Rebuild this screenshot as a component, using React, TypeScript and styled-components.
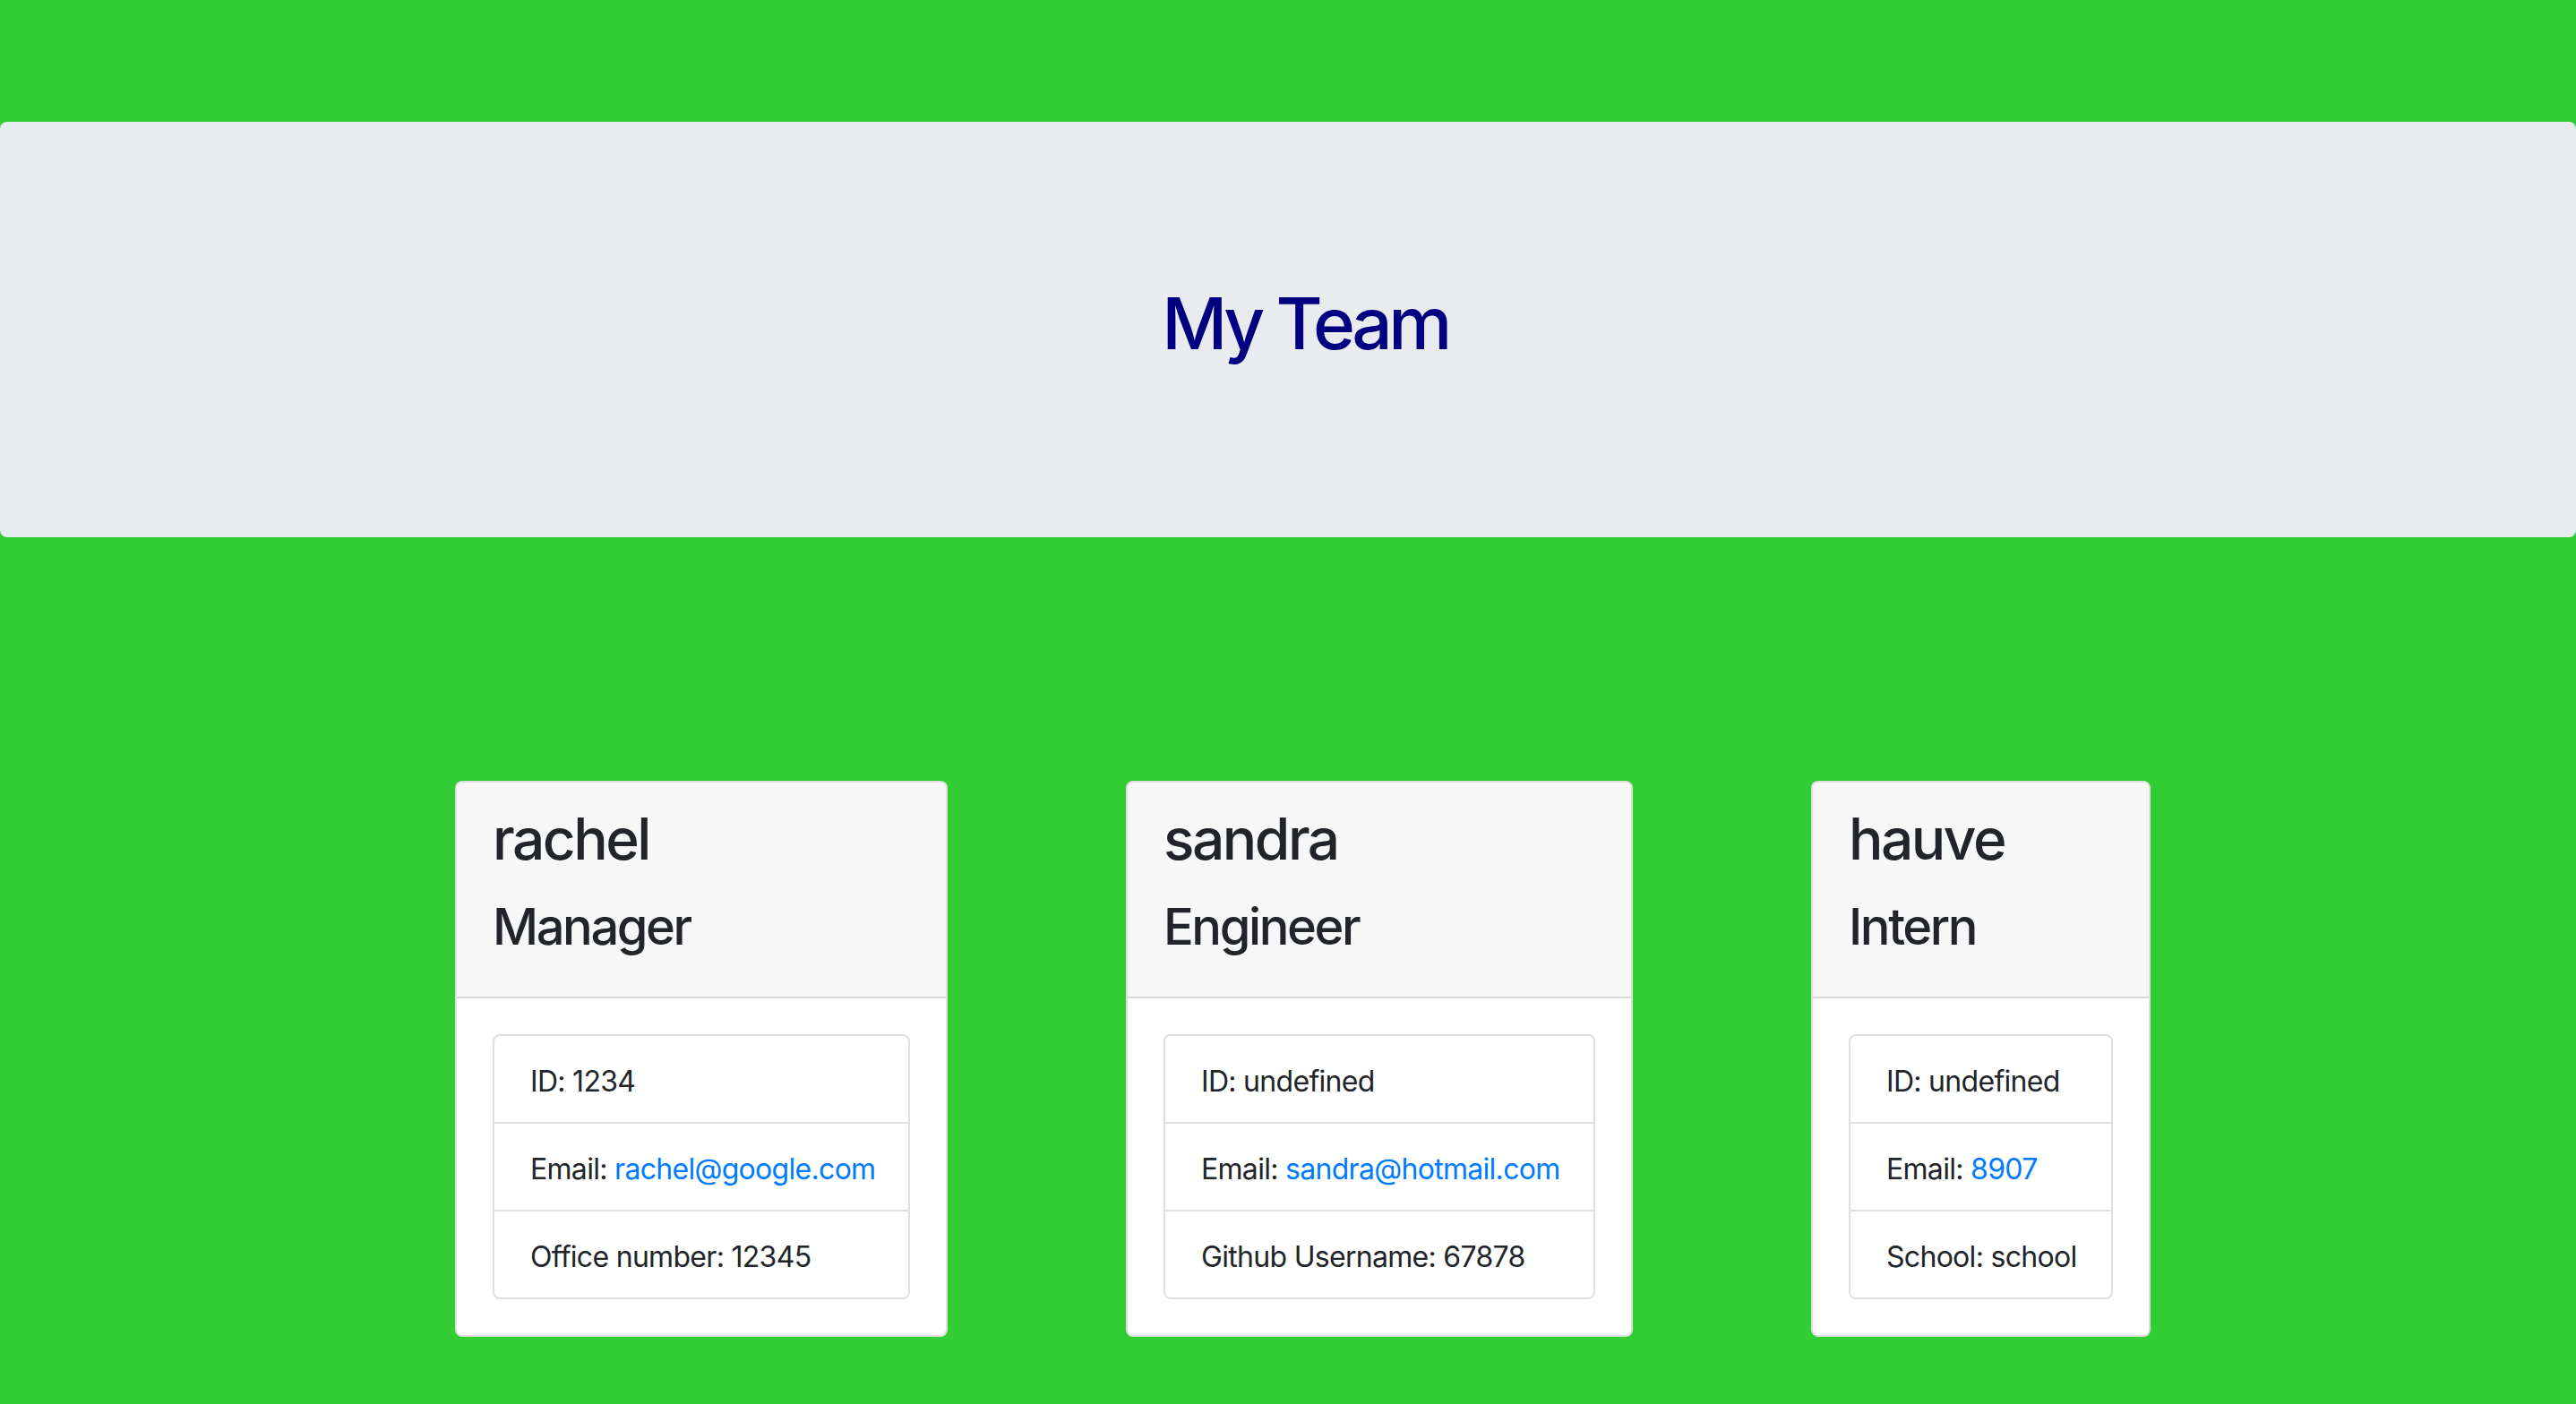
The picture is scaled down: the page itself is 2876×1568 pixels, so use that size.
import React from "react";
import styled, { createGlobalStyle } from "styled-components";

const GlobalStyle = createGlobalStyle`
  html, body {
    margin: 0;
    padding: 0;
  }
  body {
    background: #32cd32;
    font-family: Inter, "Noto Sans", "Liberation Sans", sans-serif;
    color: #212529;
    min-height: 1568px;
  }
  * { box-sizing: border-box; }
`;

const Page = styled.div`
  display: flex;
  flex-direction: column;
  padding-top: 136px;
`;

const Jumbotron = styled.header`
  background: #e9ecef;
  border-radius: 8px;
  height: 464px;
  padding: 177px 0 0 38px;
  text-align: center;
`;

const Title = styled.h1`
  margin: 0;
  font-size: 80px;
  line-height: 96px;
  font-weight: 500;
  color: #000080;
  letter-spacing: -4.5px;
`;

const CardRow = styled.main`
  display: flex;
  align-items: flex-start;
  gap: 199px;
  padding-left: 508px;
  margin-top: 272px;
`;

const Card = styled.section<{ $w: number }>`
  width: ${(p) => p.$w}px;
  background: #fff;
  border: 2px solid rgba(0, 0, 0, 0.125);
  border-radius: 8px;
  display: flex;
  flex-direction: column;
  overflow: hidden;
`;

const CardHeader = styled.div`
  background: #f7f7f7;
  padding: 24px 40px;
  border-bottom: 2px solid rgba(0, 0, 0, 0.125);
`;

const Name = styled.h2`
  margin: 0 0 27px;
  font-size: 64px;
  line-height: 77px;
  font-weight: 500;
  color: #212529;
  letter-spacing: -2.5px;
`;

const Role = styled.h3`
  margin: 0 0 20px;
  font-size: 56px;
  line-height: 67px;
  font-weight: 500;
  color: #212529;
  letter-spacing: -2.4px;
`;

const CardBody = styled.div`
  padding: 40px;
`;

const ListGroup = styled.ul`
  list-style: none;
  margin: 0;
  padding: 0;
  border: 2px solid rgba(0, 0, 0, 0.125);
  border-radius: 8px;
`;

const ListItem = styled.li`
  padding: 27px 40px 21px;
  font-size: 32px;
  line-height: 48px;
  color: #212529;
  white-space: nowrap;
  letter-spacing: -0.7px;
  & + & {
    border-top: 2px solid rgba(0, 0, 0, 0.125);
  }
`;

const Link = styled.a`
  color: #007bff;
  text-decoration: none;
`;

type Member = {
  name: string;
  role: string;
  id: string;
  email: string;
  extraLabel: string;
  extraValue: string;
  width: number;
};

const team: Member[] = [
  {
    name: "rachel",
    role: "Manager",
    id: "1234",
    email: "rachel@google.com",
    extraLabel: "Office number",
    extraValue: "12345",
    width: 550,
  },
  {
    name: "sandra",
    role: "Engineer",
    id: "undefined",
    email: "sandra@hotmail.com",
    extraLabel: "Github Username",
    extraValue: "67878",
    width: 566,
  },
  {
    name: "hauve",
    role: "Intern",
    id: "undefined",
    email: "8907",
    extraLabel: "School",
    extraValue: "school",
    width: 379,
  },
];

export default function App() {
  return (
    <>
      <GlobalStyle />
      <Page>
        <Jumbotron>
          <Title>My Team</Title>
        </Jumbotron>
        <CardRow>
          {team.map((m) => (
            <Card key={m.name} $w={m.width}>
              <CardHeader>
                <Name>{m.name}</Name>
                <Role>{m.role}</Role>
              </CardHeader>
              <CardBody>
                <ListGroup>
                  <ListItem>ID: {m.id}</ListItem>
                  <ListItem>
                    Email: <Link href={`mailto:${m.email}`}>{m.email}</Link>
                  </ListItem>
                  <ListItem>
                    {m.extraLabel}: {m.extraValue}
                  </ListItem>
                </ListGroup>
              </CardBody>
            </Card>
          ))}
        </CardRow>
      </Page>
    </>
  );
}
